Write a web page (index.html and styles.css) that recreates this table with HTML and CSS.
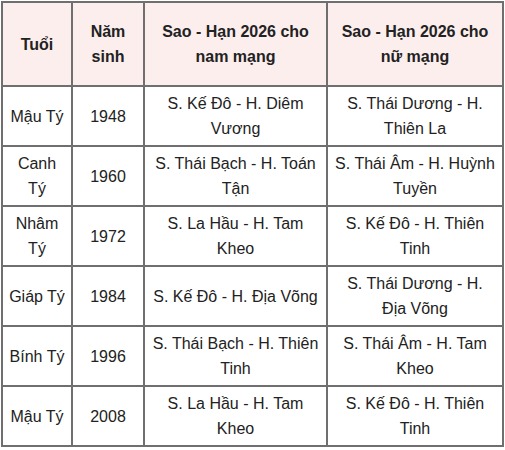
FILE: index.html
```html
<!DOCTYPE html>
<html lang="vi">
<head>
<meta charset="utf-8">
<link rel="stylesheet" href="styles.css">
</head>
<body>
<table class="sao-han">
  <colgroup>
    <col class="c1"><col class="c2"><col class="c3"><col class="c4">
  </colgroup>
  <thead>
    <tr>
      <th>Tuổi</th>
      <th>Năm sinh</th>
      <th>Sao - Hạn 2026 cho nam mạng</th>
      <th>Sao - Hạn 2026 cho nữ mạng</th>
    </tr>
  </thead>
  <tbody>
    <tr><td>Mậu Tý</td><td>1948</td><td>S. Kế Đô - H. Diêm Vương</td><td>S. Thái Dương - H. Thiên La</td></tr>
    <tr><td>Canh Tý</td><td>1960</td><td>S. Thái Bạch - H. Toán Tận</td><td>S. Thái Âm - H. Huỳnh Tuyền</td></tr>
    <tr><td>Nhâm Tý</td><td>1972</td><td>S. La Hầu - H. Tam Kheo</td><td>S. Kế Đô - H. Thiên Tinh</td></tr>
    <tr><td>Giáp Tý</td><td>1984</td><td>S. Kế Đô - H. Địa Võng</td><td>S. Thái Dương - H. Địa Võng</td></tr>
    <tr><td>Bính Tý</td><td>1996</td><td>S. Thái Bạch - H. Thiên Tinh</td><td>S. Thái Âm - H. Tam Kheo</td></tr>
    <tr><td>Mậu Tý</td><td>2008</td><td>S. La Hầu - H. Tam Kheo</td><td>S. Kế Đô - H. Thiên Tinh</td></tr>
  </tbody>
</table>
</body>
</html>
```

FILE: styles.css
```css
html, body {
  margin: 0;
  padding: 0;
  background: #ffffff;
}

body {
  padding: 1px 0 0 1px;
  font-family: "Liberation Sans", Arial, sans-serif;
  font-size: 16px;
  color: #222222;
}

.sao-han {
  width: 503px;
  table-layout: fixed;
  border-collapse: separate;
  border-spacing: 0;
  border: 1px solid #6f6f6f;
}

.c1 { width: 70px; }
.c2 { width: 72px; }
.c3 { width: 183px; }
.c4 { width: 176px; }

.sao-han th,
.sao-han td {
  border: 1px solid #6f6f6f;
  text-align: center;
  vertical-align: middle;
  line-height: 25px;
  padding: 4px 5px;
}

.sao-han th {
  background: #fdeeee;
  font-weight: bold;
  padding: 16px 5px;
  color: #222222;
}
```
